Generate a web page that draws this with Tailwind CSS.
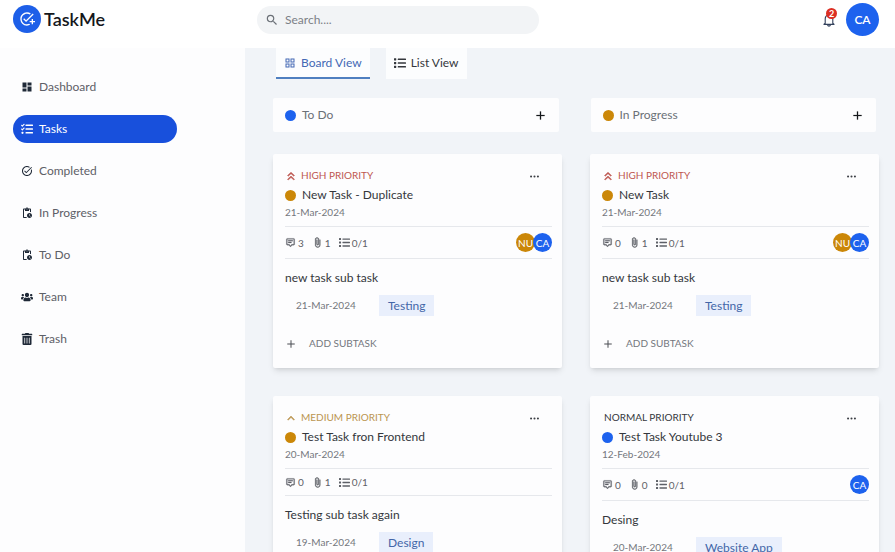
<!DOCTYPE html>
<html lang="en">
<head>
<meta charset="utf-8">
<meta name="viewport" content="width=device-width, initial-scale=1">
<title>TaskMe</title>
<script src="https://cdn.jsdelivr.net/npm/@tailwindcss/browser@4"></script>
</head>
<body class="flex h-screen flex-col overflow-hidden bg-[#f1f4f8] font-['Lato','Open_Sans',sans-serif] text-xs text-[#5d6067]">
<svg class="hidden" aria-hidden="true">
  <symbol id="add-task" viewBox="0 0 24 24"><path d="M22 5.18 10.59 16.6l-4.24-4.24 1.41-1.41 2.83 2.83 10-10L22 5.18zM12 20c-4.41 0-8-3.59-8-8s3.59-8 8-8c1.57 0 3.04.46 4.28 1.25l1.45-1.45A10.02 10.02 0 0 0 12 2C6.48 2 2 6.48 2 12s4.48 10 10 10c1.73 0 3.36-.44 4.78-1.22l-1.5-1.5c-1 .46-2.11.72-3.28.72zm7-5h-3v2h3v3h2v-3h3v-2h-3v-3h-2v3z"/></symbol>
  <symbol id="search" viewBox="0 0 24 24"><path d="M15.5 14h-.79l-.28-.27A6.47 6.47 0 0 0 16 9.5 6.5 6.5 0 1 0 9.5 16c1.61 0 3.09-.59 4.23-1.57l.27.28v.79l5 4.99L20.49 19l-4.99-5zm-6 0C7.01 14 5 11.99 5 9.5S7.01 5 9.5 5 14 7.01 14 9.5 11.99 14 9.5 14z"/></symbol>
  <symbol id="dashboard" viewBox="0 0 24 24"><path d="M3 13h8V3H3v10zm0 8h8v-6H3v6zm10 0h8V11h-8v10zm0-18v6h8V3h-8z"/></symbol>
  <symbol id="tasks" viewBox="0 0 512 512"><path d="M139.61 35.5a12 12 0 0 0-17 0L58.93 98.81l-22.7-22.12a12 12 0 0 0-17 0L3.53 92.41a12 12 0 0 0 0 17l47.59 47.4a12.78 12.78 0 0 0 17.61 0l15.59-15.62L156.52 69a12.09 12.09 0 0 0 .09-17zm0 159.19a12 12 0 0 0-17 0l-63.68 63.72-22.7-22.1a12 12 0 0 0-17 0L3.53 252a12 12 0 0 0 0 17L51 316.5a12.77 12.77 0 0 0 17.6 0l15.7-15.69 72.2-72.22a12 12 0 0 0 .09-16.9zM64 368c-26.49 0-48.59 21.5-48.59 48S37.53 464 64 464a48 48 0 0 0 0-96zm432 16H208a16 16 0 0 0-16 16v32a16 16 0 0 0 16 16h288a16 16 0 0 0 16-16v-32a16 16 0 0 0-16-16zm0-320H208a16 16 0 0 0-16 16v32a16 16 0 0 0 16 16h288a16 16 0 0 0 16-16V80a16 16 0 0 0-16-16zm0 160H208a16 16 0 0 0-16 16v32a16 16 0 0 0 16 16h288a16 16 0 0 0 16-16v-32a16 16 0 0 0-16-16z"/></symbol>
  <symbol id="task-alt" viewBox="0 0 24 24"><path d="M22 5.18 10.59 16.6l-4.24-4.24 1.41-1.41 2.83 2.83 10-10L22 5.18zM19.79 10.22c.13.57.21 1.17.21 1.78 0 4.42-3.58 8-8 8s-8-3.58-8-8 3.58-8 8-8c1.58 0 3.04.46 4.28 1.25l1.44-1.44A9.9 9.9 0 0 0 12 2C6.48 2 2 6.48 2 12s4.48 10 10 10 10-4.48 10-10c0-1.19-.22-2.33-.6-3.39l-1.61 1.61z"/></symbol>
  <symbol id="pending" viewBox="0 0 24 24"><path d="M17 12c-2.76 0-5 2.24-5 5s2.24 5 5 5 5-2.24 5-5-2.24-5-5-5zm1.65 7.35L16.5 17.2V14h1v2.79l1.85 1.85-.7.71zM18 3h-3.18C14.4 1.84 13.3 1 12 1s-2.4.84-2.82 2H6c-1.1 0-2 .9-2 2v15c0 1.1.9 2 2 2h6.11a6.743 6.743 0 0 1-1.42-2H6V5h2v3h8V5h2v5.08c.71.1 1.38.31 2 .6V5c0-1.1-.9-2-2-2zm-6 2c-.55 0-1-.45-1-1s.45-1 1-1 1 .45 1 1-.45 1-1 1z"/></symbol>
  <symbol id="users" viewBox="0 0 640 512"><path d="M96 224c35.3 0 64-28.7 64-64s-28.7-64-64-64-64 28.7-64 64 28.7 64 64 64zm448 0c35.3 0 64-28.7 64-64s-28.7-64-64-64-64 28.7-64 64 28.7 64 64 64zm32 32h-64c-17.6 0-33.5 7.1-45.1 18.6 40.3 22.1 68.9 62 75.1 109.4h66c17.7 0 32-14.3 32-32v-32c0-35.3-28.7-64-64-64zm-256 0c61.9 0 112-50.1 112-112S381.900 32 320 32 208 82.100 208 144s50.100 112 112 112zm76.800 32h-8.300c-20.800 10-43.900 16-68.500 16s-47.600-6-68.500-16h-8.300C179.600 288 128 339.600 128 403.200V432c0 26.500 21.500 48 48 48h288c26.500 0 48-21.500 48-48v-28.800c0-63.600-51.600-115.200-115.200-115.200zm-223.700-13.400C161.500 263.100 145.600 256 128 256H64c-35.300 0-64 28.700-64 64v32c0 17.700 14.300 32 32 32h65.900c6.300-47.400 34.900-87.300 75.200-109.400z"/></symbol>
  <symbol id="trash" viewBox="0 0 448 512"><path d="M32 464a48 48 0 0 0 48 48h288a48 48 0 0 0 48-48V128H32zm272-256a16 16 0 0 1 32 0v224a16 16 0 0 1-32 0zm-96 0a16 16 0 0 1 32 0v224a16 16 0 0 1-32 0zm-96 0a16 16 0 0 1 32 0v224a16 16 0 0 1-32 0zM432 32H312l-9.400-18.700A24 24 0 0 0 281.100 0H166.800a23.700 23.700 0 0 0-21.400 13.300L136 32H16A16 16 0 0 0 0 48v32a16 16 0 0 0 16 16h416a16 16 0 0 0 16-16V48a16 16 0 0 0-16-16z"/></symbol>
  <symbol id="grid" viewBox="0 0 24 24"><path fill-rule="evenodd" d="M3 3v8h8V3H3zm6 6H5V5h4v4zm-6 4v8h8v-8H3zm6 6H5v-4h4v4zm4-16v8h8V3h-8zm6 6h-4V5h4v4zm-6 4v8h8v-8h-8zm6 6h-4v-4h4v4z"/></symbol>
  <symbol id="list" viewBox="0 0 512 512"><path d="M80 368H16a16 16 0 0 0-16 16v64a16 16 0 0 0 16 16h64a16 16 0 0 0 16-16v-64a16 16 0 0 0-16-16zm0-320H16A16 16 0 0 0 0 64v64a16 16 0 0 0 16 16h64a16 16 0 0 0 16-16V64a16 16 0 0 0-16-16zm0 160H16a16 16 0 0 0-16 16v64a16 16 0 0 0 16 16h64a16 16 0 0 0 16-16v-64a16 16 0 0 0-16-16zm416 176H176a16 16 0 0 0-16 16v32a16 16 0 0 0 16 16h320a16 16 0 0 0 16-16v-32a16 16 0 0 0-16-16zm0-320H176a16 16 0 0 0-16 16v32a16 16 0 0 0 16 16h320a16 16 0 0 0 16-16V80a16 16 0 0 0-16-16zm0 160H176a16 16 0 0 0-16 16v32a16 16 0 0 0 16 16h320a16 16 0 0 0 16-16v-32a16 16 0 0 0-16-16z"/></symbol>
  <symbol id="plus" viewBox="0 0 512 512"><path d="M416 277.300H277.300V416h-42.600V277.300H96v-42.600h138.700V96h42.600v138.700H416v42.600z"/></symbol>
  <symbol id="double-up" viewBox="0 0 24 24"><path stroke="currentColor" d="M5 18.590 6.410 20 12 14.920 17.590 20 19 18.590l-7-6.500zM5 11l1.410 1.410L12 7.330l5.590 5.080L19 11l-7-6.500z"/></symbol>
  <symbol id="up" viewBox="0 0 24 24"><path stroke="currentColor" d="M6.410 16.410 12 10.830l5.590 5.580L19 15l-7-7-7 7z"/></symbol>
  <symbol id="dots" viewBox="0 0 16 16"><path d="M3 9.500a1.500 1.500 0 1 1 0-3 1.500 1.500 0 0 1 0 3zm5 0a1.500 1.500 0 1 1 0-3 1.500 1.500 0 0 1 0 3zm5 0a1.500 1.500 0 1 1 0-3 1.500 1.500 0 0 1 0 3z"/></symbol>
  <symbol id="message" viewBox="0 0 24 24"><path stroke="currentColor" stroke-width=".5" d="M5 3c-1.100 0-2 .9-2 2v11c0 1.100.9 2 2 2h3.600l3.400 4 3.400-4H19c1.100 0 2-.9 2-2V5c0-1.100-.9-2-2-2zm14 13h-4.500L12 19l-2.500-3H5V5h14zM7 7h10v2H7zm0 4h7v2H7z"/></symbol>
  <symbol id="clip" viewBox="0 0 24 24"><path stroke="currentColor" stroke-width=".8" d="M16.500 6v11.500c0 2.210-1.790 4-4 4s-4-1.790-4-4V5a2.500 2.500 0 0 1 5 0v10.500c0 .55-.45 1-1 1s-1-.45-1-1V6H10v9.500a2.500 2.500 0 0 0 5 0V5c0-2.210-1.790-4-4-4S7 2.790 7 5v12.500c0 3.040 2.460 5.500 5.500 5.500s5.500-2.460 5.500-5.500V6h-1.500z"/></symbol>
  <symbol id="bell" viewBox="0 0 24 24"><path d="M18.500 17.500V10c0-3.300-2.200-5.900-5.200-6.500V2.500h-2.600v1C7.700 4.100 5.500 6.700 5.500 10v7.500L3.500 19v.500h17V19zM9.500 20.500c.3 1.200 1.300 2 2.500 2s2.200-.8 2.500-2" fill="none" stroke="currentColor" stroke-width="1.900" stroke-linejoin="round"/></symbol>
</svg>

<header class="flex h-12 shrink-0 items-start bg-white pl-[13px] pr-4">
  <a href="#" class="mt-[5px] flex w-[244px] shrink-0 items-center gap-[3px] text-lg font-semibold text-[#15171b]">
    <span class="flex size-7 items-center justify-center rounded-full bg-[#1d5fe8] text-white"><svg class="size-4 fill-current"><use href="#add-task"/></svg></span>
    TaskMe
  </a>
  <label class="mt-[6px] flex h-7 w-[282px] items-center gap-[6px] rounded-full bg-[#f2f4f6] px-2 text-[#6b7077]">
    <svg class="size-[14px] shrink-0 fill-current"><use href="#search"/></svg>
    <input type="text" aria-label="Search" placeholder="Search...." class="w-full min-w-0 bg-transparent outline-none placeholder:text-[#7c8087]">
  </label>
  <div class="ml-auto flex items-center gap-[10px] pt-[3px]">
    <button aria-label="Notifications, 2 unread" class="relative text-[#33415c]">
      <svg class="size-[14px]"><use href="#bell"/></svg>
      <span class="absolute -top-[5px] left-1 flex size-[11px] items-center justify-center rounded-full bg-[#dc2f24] text-[9px] leading-none font-bold text-white">2</span>
    </button>
    <button class="flex size-[33px] items-center justify-center rounded-full bg-[#1d62ee] text-xs font-semibold text-white">CA</button>
  </div>
</header>

<div class="flex min-h-0 flex-1">
  <nav class="flex w-[245px] shrink-0 flex-col gap-[14px] bg-[#fdfdfe] pt-[25px] pr-[68px] pl-[13px]">
    <a href="#" class="flex h-7 items-center gap-[6px] rounded-full px-2"><svg class="size-3 fill-[#1f2937]"><use href="#dashboard"/></svg>Dashboard</a>
    <a href="#" class="flex h-7 items-center gap-[6px] rounded-full bg-[#1850dc] px-2 text-white"><svg class="size-3 fill-current"><use href="#tasks"/></svg>Tasks</a>
    <a href="#" class="flex h-7 items-center gap-[6px] rounded-full px-2"><svg class="size-3 fill-[#1f2937]"><use href="#task-alt"/></svg>Completed</a>
    <a href="#" class="flex h-7 items-center gap-[6px] rounded-full px-2"><svg class="size-3 fill-[#1f2937]"><use href="#pending"/></svg>In Progress</a>
    <a href="#" class="flex h-7 items-center gap-[6px] rounded-full px-2"><svg class="size-3 fill-[#1f2937]"><use href="#pending"/></svg>To Do</a>
    <a href="#" class="flex h-7 items-center gap-[6px] rounded-full px-2"><svg class="size-3 fill-[#1f2937]"><use href="#users"/></svg>Team</a>
    <a href="#" class="flex h-7 items-center gap-[6px] rounded-full px-2"><svg class="size-3 fill-[#1f2937]"><use href="#trash"/></svg>Trash</a>
  </nav>

  <main class="min-w-0 flex-1 overflow-hidden pr-4 pl-7">
    <div class="flex gap-4 pl-[3px]">
      <button class="flex h-[31px] items-center gap-[5px] border-b-2 border-[#4f7fc0] bg-[#fcfdfe] px-2 text-[#4368b4]"><svg class="size-3 fill-current"><use href="#grid"/></svg>Board View</button>
      <button class="flex h-[31px] items-center gap-[5px] border-b-2 border-transparent bg-[#fcfdfe] px-2 text-[#34373c]"><svg class="size-3 fill-current"><use href="#list"/></svg>List View</button>
    </div>

    <div class="mt-[19px] grid grid-cols-2 gap-8 pr-[3px]">
      <div class="flex h-[34px] items-center gap-[6px] rounded-xs bg-[#fdfdfe] pr-3 pl-3">
        <span class="size-[11px] rounded-full bg-[#1d62ee]"></span><h2 class="text-[#6b7077]">To Do</h2>
        <button aria-label="Add to do" class="ml-auto"><svg class="size-[13px] fill-[#15171b] stroke-[#15171b] stroke-[8]"><use href="#plus"/></svg></button>
      </div>
      <div class="flex h-[34px] items-center gap-[6px] rounded-xs bg-[#fdfdfe] pr-3 pl-3">
        <span class="size-[11px] rounded-full bg-[#cb8708]"></span><h2 class="text-[#6b7077]">In Progress</h2>
        <button aria-label="Add in progress" class="ml-auto"><svg class="size-[13px] fill-[#15171b] stroke-[#15171b] stroke-[8]"><use href="#plus"/></svg></button>
      </div>
    </div>

    <div class="mt-[22px] grid grid-cols-2 items-start gap-7">
      <article class="rounded-xs bg-[#fdfdfe] pt-[14px] pr-[10px] pb-3 pl-3 shadow-md">
        <div class="flex h-4 items-center gap-1 pr-3 text-[10px] text-[#bd5750]"><svg class="size-3 fill-current"><use href="#double-up"/></svg>HIGH PRIORITY
          <button aria-label="Task options" class="ml-auto"><svg class="size-[11px] fill-[#3c3f45]"><use href="#dots"/></svg></button></div>
        <h3 class="flex h-[22px] items-center gap-[6px] text-[#34373c]"><span class="size-[11px] rounded-full bg-[#cb8708]"></span>New Task - Duplicate</h3>
        <p class="text-[10px] leading-3 text-[#74777d]">21-Mar-2024</p>
        <div class="mt-2 flex items-center gap-2 border-y border-[#e6e8ec] py-[6px] text-[10px] leading-[14px]">
          <span class="flex items-center gap-[2px]"><svg class="size-[11px] fill-current"><use href="#message"/></svg>3</span>
          <span class="flex items-center gap-[2px]"><svg class="size-[11px] fill-current"><use href="#clip"/></svg>1</span>
          <span class="flex items-center gap-[2px]"><svg class="size-[11px] fill-current"><use href="#list"/></svg>0/1</span>
          <span class="ml-auto flex -space-x-[2px] text-white"><span class="flex size-[19px] items-center justify-center rounded-full bg-[#cb8708]">NU</span><span class="flex size-[19px] items-center justify-center rounded-full bg-[#1d62ee]">CA</span></span>
        </div>
        <h4 class="mt-[10px] leading-[18px] text-[#34373c]">new task sub task</h4>
        <div class="mt-2 flex h-[21px] items-center pl-[11px] text-[10px] text-[#74777d]"><span class="w-[83px]">21-Mar-2024</span><span class="bg-[#e9effc] px-[9px] text-xs leading-[21px] text-[#4366a8]">Testing</span></div>
        <button class="mt-4 flex h-6 items-center gap-3 text-[10px] text-[#74777d]"><svg class="size-3 fill-[#4a4d53]"><use href="#plus"/></svg>ADD SUBTASK</button>
      </article>

      <article class="rounded-xs bg-[#fdfdfe] pt-[14px] pr-[10px] pb-3 pl-3 shadow-md">
        <div class="flex h-4 items-center gap-1 pr-3 text-[10px] text-[#bd5750]"><svg class="size-3 fill-current"><use href="#double-up"/></svg>HIGH PRIORITY
          <button aria-label="Task options" class="ml-auto"><svg class="size-[11px] fill-[#3c3f45]"><use href="#dots"/></svg></button></div>
        <h3 class="flex h-[22px] items-center gap-[6px] text-[#34373c]"><span class="size-[11px] rounded-full bg-[#cb8708]"></span>New Task</h3>
        <p class="text-[10px] leading-3 text-[#74777d]">21-Mar-2024</p>
        <div class="mt-2 flex items-center gap-2 border-y border-[#e6e8ec] py-[6px] text-[10px] leading-[14px]">
          <span class="flex items-center gap-[2px]"><svg class="size-[11px] fill-current"><use href="#message"/></svg>0</span>
          <span class="flex items-center gap-[2px]"><svg class="size-[11px] fill-current"><use href="#clip"/></svg>1</span>
          <span class="flex items-center gap-[2px]"><svg class="size-[11px] fill-current"><use href="#list"/></svg>0/1</span>
          <span class="ml-auto flex -space-x-[2px] text-white"><span class="flex size-[19px] items-center justify-center rounded-full bg-[#cb8708]">NU</span><span class="flex size-[19px] items-center justify-center rounded-full bg-[#1d62ee]">CA</span></span>
        </div>
        <h4 class="mt-[10px] leading-[18px] text-[#34373c]">new task sub task</h4>
        <div class="mt-2 flex h-[21px] items-center pl-[11px] text-[10px] text-[#74777d]"><span class="w-[83px]">21-Mar-2024</span><span class="bg-[#e9effc] px-[9px] text-xs leading-[21px] text-[#4366a8]">Testing</span></div>
        <button class="mt-4 flex h-6 items-center gap-3 text-[10px] text-[#74777d]"><svg class="size-3 fill-[#4a4d53]"><use href="#plus"/></svg>ADD SUBTASK</button>
      </article>

      <article class="rounded-xs bg-[#fdfdfe] pt-[14px] pr-[10px] pb-3 pl-3 shadow-md">
        <div class="flex h-4 items-center gap-1 pr-3 text-[10px] text-[#bb9550]"><svg class="size-3 fill-current"><use href="#up"/></svg>MEDIUM PRIORITY
          <button aria-label="Task options" class="ml-auto"><svg class="size-[11px] fill-[#3c3f45]"><use href="#dots"/></svg></button></div>
        <h3 class="flex h-[22px] items-center gap-[6px] text-[#34373c]"><span class="size-[11px] rounded-full bg-[#cb8708]"></span>Test Task fron Frontend</h3>
        <p class="text-[10px] leading-3 text-[#74777d]">20-Mar-2024</p>
        <div class="mt-2 flex items-center gap-2 border-y border-[#e6e8ec] py-[6px] text-[10px] leading-[14px]">
          <span class="flex items-center gap-[2px]"><svg class="size-[11px] fill-current"><use href="#message"/></svg>0</span>
          <span class="flex items-center gap-[2px]"><svg class="size-[11px] fill-current"><use href="#clip"/></svg>1</span>
          <span class="flex items-center gap-[2px]"><svg class="size-[11px] fill-current"><use href="#list"/></svg>0/1</span>
        </div>
        <h4 class="mt-[10px] leading-[18px] text-[#34373c]">Testing sub task again</h4>
        <div class="mt-2 flex h-[21px] items-center pl-[11px] text-[10px] text-[#74777d]"><span class="w-[83px]">19-Mar-2024</span><span class="bg-[#e9effc] px-[9px] text-xs leading-[21px] text-[#4366a8]">Design</span></div>
        <button class="mt-4 flex h-6 items-center gap-3 text-[10px] text-[#74777d]"><svg class="size-3 fill-[#4a4d53]"><use href="#plus"/></svg>ADD SUBTASK</button>
      </article>

      <article class="rounded-xs bg-[#fdfdfe] pt-[14px] pr-[10px] pb-3 pl-3 shadow-md">
        <div class="flex h-4 items-center pr-3 pl-[2px] text-[10px] text-[#34373c]">NORMAL PRIORITY
          <button aria-label="Task options" class="ml-auto"><svg class="size-[11px] fill-[#3c3f45]"><use href="#dots"/></svg></button></div>
        <h3 class="flex h-[22px] items-center gap-[6px] text-[#34373c]"><span class="size-[11px] rounded-full bg-[#1d62ee]"></span>Test Task Youtube 3</h3>
        <p class="text-[10px] leading-3 text-[#74777d]">12-Feb-2024</p>
        <div class="mt-2 flex items-center gap-2 border-y border-[#e6e8ec] py-[6px] text-[10px] leading-[14px]">
          <span class="flex items-center gap-[2px]"><svg class="size-[11px] fill-current"><use href="#message"/></svg>0</span>
          <span class="flex items-center gap-[2px]"><svg class="size-[11px] fill-current"><use href="#clip"/></svg>0</span>
          <span class="flex items-center gap-[2px]"><svg class="size-[11px] fill-current"><use href="#list"/></svg>0/1</span>
          <span class="ml-auto flex text-white"><span class="flex size-[19px] items-center justify-center rounded-full bg-[#1d62ee]">CA</span></span>
        </div>
        <h4 class="mt-[10px] leading-[18px] text-[#34373c]">Desing</h4>
        <div class="mt-2 flex h-[21px] items-center pl-[11px] text-[10px] text-[#74777d]"><span class="w-[83px]">20-Mar-2024</span><span class="bg-[#e9effc] px-[9px] text-xs leading-[21px] text-[#4366a8]">Website App</span></div>
        <button class="mt-4 flex h-6 items-center gap-3 text-[10px] text-[#74777d]"><svg class="size-3 fill-[#4a4d53]"><use href="#plus"/></svg>ADD SUBTASK</button>
      </article>
    </div>
  </main>
</div>
</body>
</html>
